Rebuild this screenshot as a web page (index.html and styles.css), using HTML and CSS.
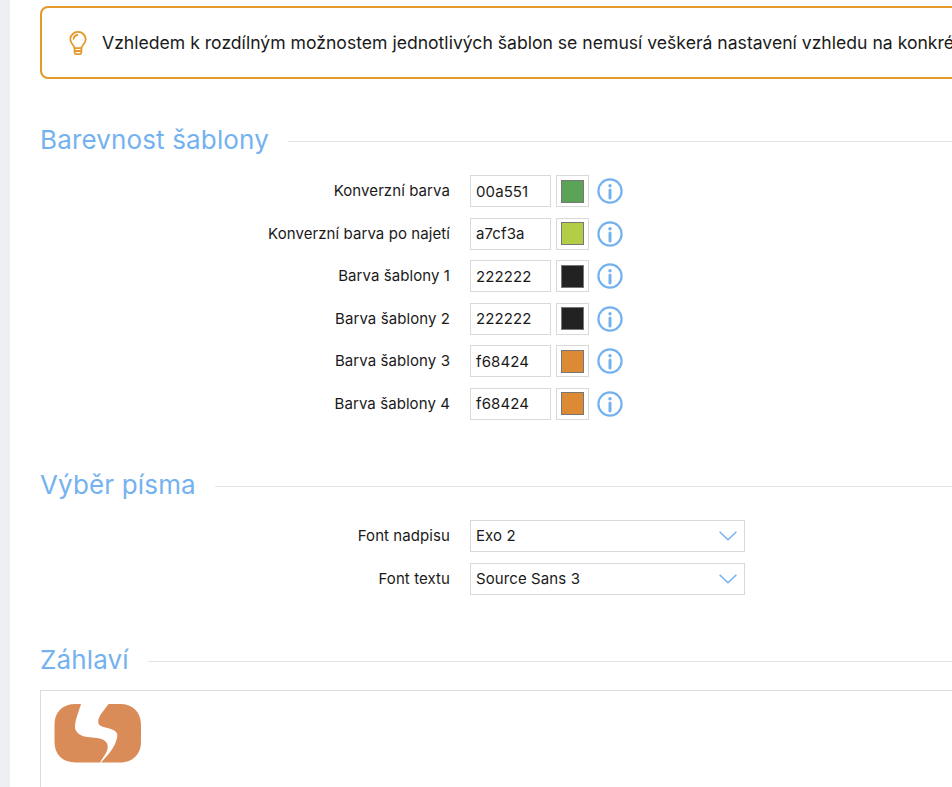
FILE: index.html
```html
<!DOCTYPE html>
<html lang="cs">
<head>
<meta charset="utf-8">
<title>Nastavení šablony</title>
<link rel="stylesheet" href="styles.css">
</head>
<body>
<div class="page">
  <div class="rail"></div>
  <main class="main">
    <div class="alert">
      <svg class="bulb" width="18" height="24" viewBox="0 0 18 24" fill="none" stroke="#e39a2b" stroke-width="1.8" stroke-linecap="round" stroke-linejoin="round">
        <path d="M5.6 17.2c0-2.400-4.300-4.600-4.300-9A7.600 7.600 0 0 1 9 .9a7.600 7.600 0 0 1 7.700 7.300c0 4.400-4.300 6.600-4.300 9z"/>
        <path d="M5.600 17.200v4.400c0 .9.700 1.500 1.500 1.500h3.800c.8 0 1.500-.6 1.500-1.500v-4.400"/>
        <path d="M5.800 20h6.400"/>
        <path d="M4.600 7.800A4.400 4.400 0 0 1 8.400 4"/>
      </svg>
      <span class="alert-text">Vzhledem k rozdílným možnostem jednotlivých šablon se nemusí veškerá nastavení vzhledu na konkrétní šabloně projevit.</span>
    </div>

    <section class="section section-colors">
      <h2 class="heading"><span>Barevnost šablony</span></h2>
      <div class="rows">
        <div class="row"><label class="label">Konverzní barva</label><div class="input text">00a551</div><div class="swatch"><i class="chip chip-green"></i></div><svg class="info" viewBox="0 0 26 26"><use href="#i"/></svg></div>
        <div class="row"><label class="label">Konverzní barva po najetí</label><div class="input text">a7cf3a</div><div class="swatch"><i class="chip chip-lime"></i></div><svg class="info" viewBox="0 0 26 26"><use href="#i"/></svg></div>
        <div class="row"><label class="label">Barva šablony 1</label><div class="input text">222222</div><div class="swatch"><i class="chip chip-dark"></i></div><svg class="info" viewBox="0 0 26 26"><use href="#i"/></svg></div>
        <div class="row"><label class="label">Barva šablony 2</label><div class="input text">222222</div><div class="swatch"><i class="chip chip-dark"></i></div><svg class="info" viewBox="0 0 26 26"><use href="#i"/></svg></div>
        <div class="row"><label class="label">Barva šablony 3</label><div class="input text">f68424</div><div class="swatch"><i class="chip chip-orange"></i></div><svg class="info" viewBox="0 0 26 26"><use href="#i"/></svg></div>
        <div class="row"><label class="label">Barva šablony 4</label><div class="input text">f68424</div><div class="swatch"><i class="chip chip-orange"></i></div><svg class="info" viewBox="0 0 26 26"><use href="#i"/></svg></div>
      </div>
    </section>

    <section class="section section-fonts">
      <h2 class="heading"><span>Výběr písma</span></h2>
      <div class="rows">
        <div class="row"><label class="label">Font nadpisu</label><div class="input select">Exo 2<svg class="chev" width="18" height="10" viewBox="0 0 18 10" fill="none" stroke="#74b2ef" stroke-width="1.5"><path d="M.6.8 9 8.800 17.400.8"/></svg></div></div>
        <div class="row"><label class="label">Font textu</label><div class="input select">Source Sans 3<svg class="chev" width="18" height="10" viewBox="0 0 18 10" fill="none" stroke="#74b2ef" stroke-width="1.5"><path d="M.6.8 9 8.800 17.400.8"/></svg></div></div>
      </div>
    </section>

    <section class="section section-head">
      <h2 class="heading"><span>Záhlaví</span></h2>
      <div class="logo-box">
        <svg class="logo" width="88" height="60" viewBox="0 0 88 60">
          <path fill="#da8c58" d="M27 1C25 8 21 17 21 24C21 29 26 33 33 34C40 35 47 34.500 51 38C55 41.500 54 46 52 50L46 59.500H22C8 59.500 .5 51 .5 39V22C.5 9 8 1 22 1Z"/>
          <path fill="#da8c58" d="M54.500 1H66C79 1 87 9 87 22V39C87 51 79 59.500 66 59.500H47C52 54 58 48 61 41C63 36 65 31 61 28C57 25 50 25 46 22.500C43 20 44 16 47 11Z"/>
        </svg>
      </div>
    </section>
  </main>
</div>
<svg width="0" height="0" class="defs">
  <symbol id="i" viewBox="0 0 26 26">
    <circle cx="13" cy="13" r="11.600" fill="none" stroke="#74b2ef" stroke-width="2.200"/>
    <circle cx="13" cy="7.800" r="1.700" fill="#74b2ef"/>
    <path d="M13 12v8" stroke="#74b2ef" stroke-width="3" stroke-linecap="round"/>
  </symbol>
</svg>
</body>
</html>
```
FILE: styles.css
```css
html, body {
  margin: 0;
  height: 100%;
  overflow: hidden;
  background: #fff;
}
body {
  font-family: Inter, "Liberation Sans", sans-serif;
  color: #1a1a1a;
}
.page {
  display: flex;
  width: 1300px;
  height: 787px;
  overflow: hidden;
}
.rail {
  flex: 0 0 10px;
  background: #eeeff2;
}
.main {
  flex: 1;
  padding: 6px 0 0 30px;
  min-width: 0;
}
.alert {
  display: flex;
  align-items: center;
  gap: 15px;
  height: 73px;
  padding-left: 27px;
  border: 2px solid #e39a2b;
  border-radius: 8px;
  box-sizing: border-box;
  font-size: 17.6px;
  white-space: nowrap;
  overflow: hidden;
}
.bulb {
  flex: none;
}
.section-colors { margin-top: 42px; }
.section-fonts { margin-top: 47px; }
.section-head { margin-top: 47px; }
.heading {
  display: flex;
  align-items: center;
  gap: 19px;
  margin: 0;
  height: 36px;
  font-size: 26px;
  letter-spacing: .15px;
  font-weight: 400;
  color: #74b2ef;
  white-space: nowrap;
}
.heading::after {
  content: "";
  flex: 1;
  height: 1px;
  margin-top: 4px;
  background: #e4e4e4;
}
.rows {
  display: flex;
  flex-direction: column;
  gap: 10.5px;
  margin-top: 18px;
}
.section-fonts .rows {
  gap: 11px;
  margin-top: 17px;
}
.row {
  display: flex;
  align-items: center;
  height: 32px;
}
.label {
  flex: 0 0 410px;
  text-align: right;
  font-size: 15px;
  letter-spacing: .08px;
  margin-right: 20px;
  margin-top: -1px;
}
.input {
  box-sizing: border-box;
  height: 32px;
  display: flex;
  align-items: center;
  padding: 0 5px;
  border: 1px solid #d9d9d9;
  font-size: 15px;
  letter-spacing: .1px;
  background: #fff;
}
.text { width: 81px; }
.select {
  width: 275px;
  justify-content: space-between;
  padding-right: 7px;
}
.swatch {
  box-sizing: border-box;
  width: 33px;
  height: 32px;
  margin-left: 5px;
  border: 1px solid #d9d9d9;
  display: flex;
  align-items: center;
  justify-content: center;
}
.chip {
  box-sizing: border-box;
  display: block;
  width: 23px;
  height: 23px;
  border: 1px solid #777;
}
.chip-green { background: #5ba357; }
.chip-lime { background: #b4cd47; }
.chip-dark { background: #222; }
.chip-orange { background: #dc8a33; }
.info {
  width: 26px;
  height: 26px;
  margin-left: 8px;
}
.logo-box {
  margin-top: 12px;
  height: 200px;
  border: 1px solid #dcdcdc;
  padding: 12px 13px;
}
.logo { display: block; }
.defs { position: absolute; }
```
